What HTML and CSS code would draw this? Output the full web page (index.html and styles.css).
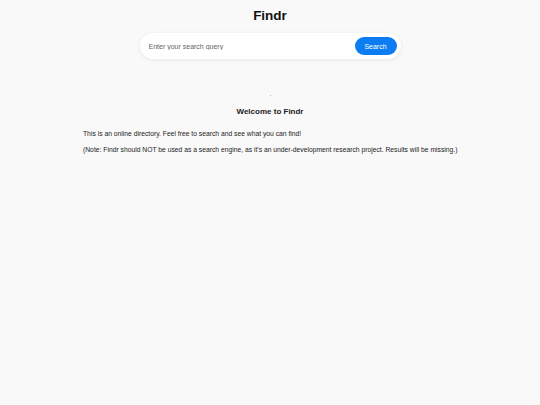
FILE: index.html
```html
<!DOCTYPE html>
<html>
<head>
<meta charset="utf-8">
<link rel="stylesheet" href="styles.css">
</head>
<body>
<header class="top">
  <h1 class="logo">Findr</h1>
  <form class="search">
    <input class="search-input" type="text" placeholder="Enter your search query">
    <button class="search-btn" type="button">Search</button>
  </form>
</header>
<main class="content">
  <div class="dot"></div>
  <h2 class="welcome">Welcome to Findr</h2>
  <p class="text">This is an online directory. Feel free to search and see what you can find!</p>
  <p class="text">(Note: Findr should NOT be used as a search engine, as it's an under-development research project. Results will be missing.)</p>
</main>
</body>
</html>
```
FILE: styles.css
```css
html, body {
  margin: 0;
  padding: 0;
  background: #f9f9f9;
  font-family: "Liberation Sans", Arial, sans-serif;
  color: #222;
}
.top {
  display: flex;
  flex-direction: column;
  align-items: center;
  padding-top: 8px;
}
.logo {
  margin: 0;
  font-size: 13.5px;
  font-weight: bold;
  color: #111;
  line-height: 16px;
}
.search {
  margin-top: 9px;
  width: 261px;
  height: 26px;
  box-sizing: border-box;
  background: #fff;
  border-radius: 13px;
  box-shadow: 0 1px 4px rgba(0,0,0,0.08);
  display: flex;
  align-items: center;
  padding: 0 4px 0 9px;
}
.search-input {
  flex: 1;
  border: none;
  outline: none;
  background: transparent;
  font-family: "Liberation Sans", Arial, sans-serif;
  font-size: 7px;
  color: #555;
  padding: 0;
}
.search-input::placeholder {
  color: #666;
}
.search-btn {
  border: none;
  background: #0b7cf2;
  color: #fff;
  font-family: "Liberation Sans", Arial, sans-serif;
  font-size: 7px;
  height: 18px;
  width: 42px;
  border-radius: 9px;
  padding: 0;
}
.content {
  padding: 0 83px;
  display: flex;
  flex-direction: column;
}
.dot {
  align-self: center;
  width: 1px;
  height: 1px;
  background: #bbb;
  margin-top: 36px;
}
.welcome {
  margin: 11px 0 0;
  text-align: center;
  font-size: 8px;
  font-weight: bold;
  color: #222;
  line-height: 10px;
}
.text {
  margin: 13px 0 0;
  font-size: 6.75px;
  line-height: 8px;
  color: #222;
  white-space: nowrap;
}
.text + .text {
  margin-top: 8px;
}
```
